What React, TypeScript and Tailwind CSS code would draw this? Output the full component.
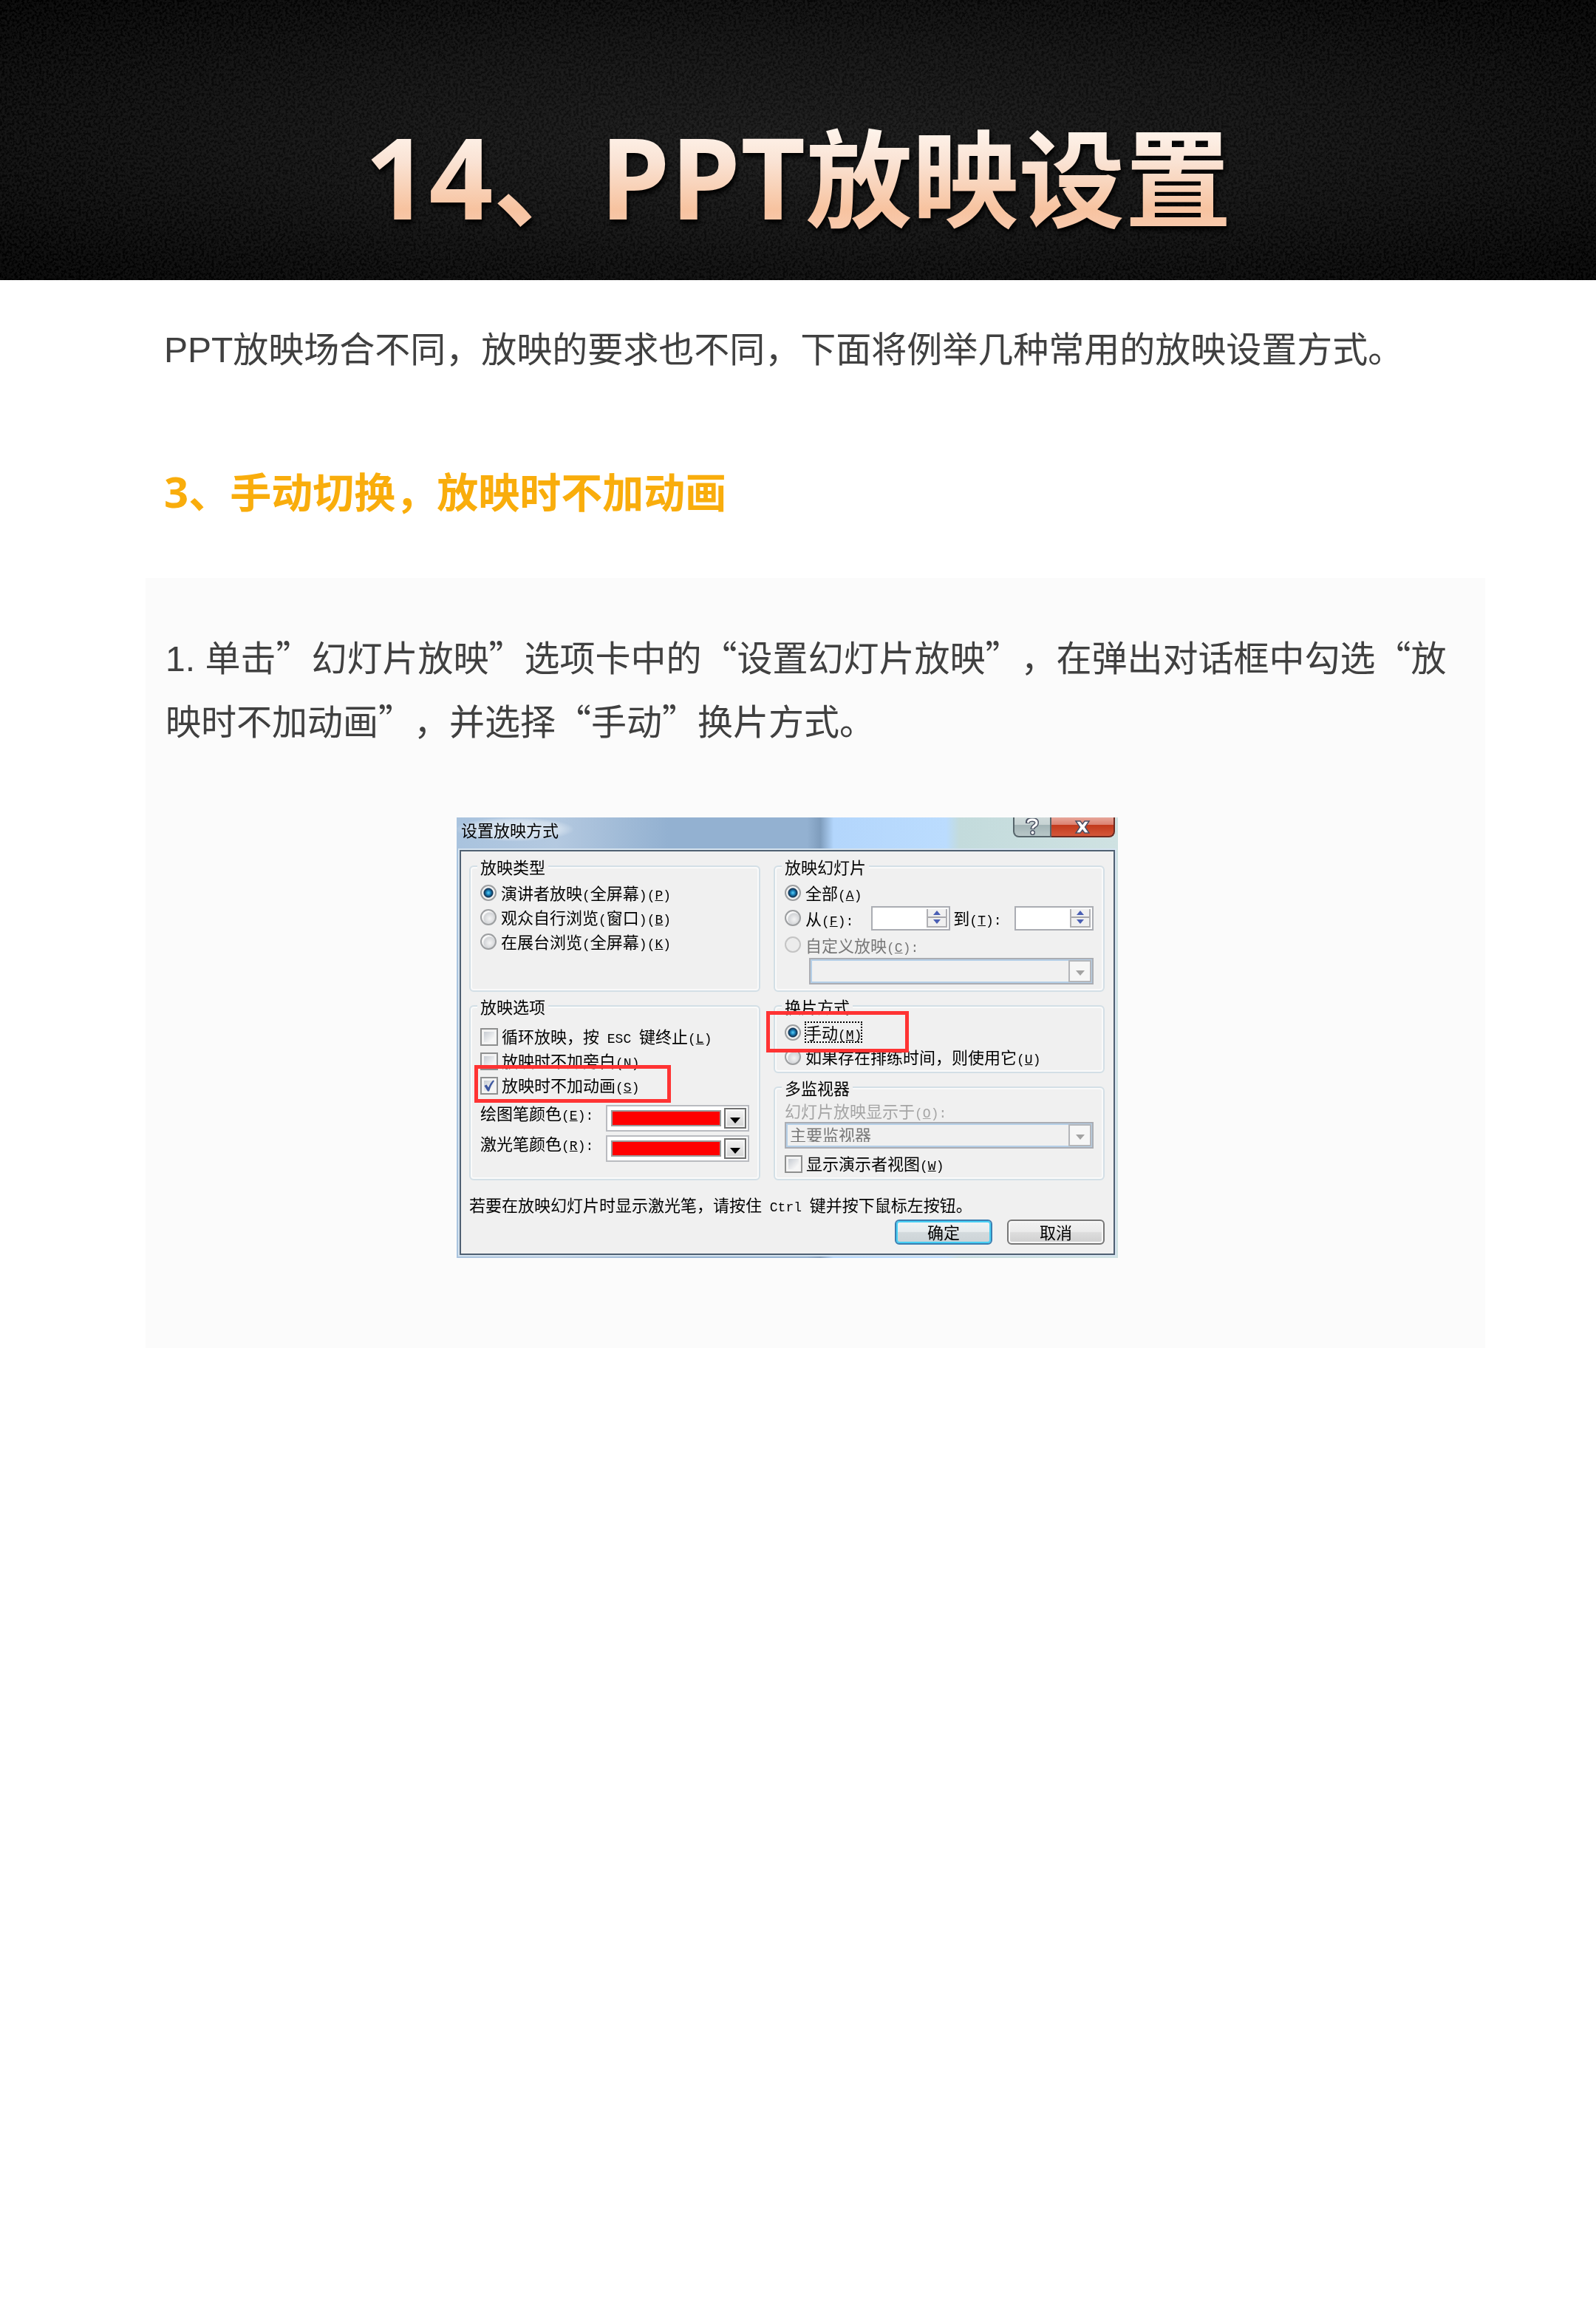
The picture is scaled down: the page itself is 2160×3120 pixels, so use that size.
import React, { useState } from 'react'

type LabelTextProps = {
  text: string
  hotkey?: string
  colon?: boolean
}

// Half-width runs use the mono face, full-width runs keep the dialog font
const LabelText = ({ text, hotkey, colon }: LabelTextProps) => (
  <span className="whitespace-pre">
    {text.split(/([\x20-\x7e]+)/).map((part, i) =>
      i % 2 ? <span key={i} className="font-['Liberation_Mono'] text-lg leading-none">{part}</span> : part
    )}
    {hotkey && (
      <span className="font-['Liberation_Mono'] text-lg leading-none">
        (<span className="underline">{hotkey}</span>){colon && ':'}
      </span>
    )}
  </span>
)

type GroupProps = {
  title: string
  className?: string
  children: React.ReactNode
}

const Group = ({ title, className = '', children }: GroupProps) => (
  <fieldset className={`min-w-0 rounded-md border-2 border-[#d3dfe6] px-[13px] shadow-[inset_0_0_0_2px_#fafafa] ${className}`}>
    <legend className="bg-[#f0f0f0] -ml-1 px-1 leading-[22px]">{title}</legend>
    {children}
  </fieldset>
)

type RadioProps = {
  name: string
  text: string
  hotkey: string
  colon?: boolean
  checked?: boolean
  disabled?: boolean
  focused?: boolean
  onSelect?: () => void
  className?: string
  children?: React.ReactNode
}

const Radio = ({ name, text, hotkey, colon, checked = false, disabled, focused, onSelect, className = 'h-[33px]', children }: RadioProps) => (
  <label className={`relative flex items-center ${disabled ? 'text-[#777]' : ''} ${className}`}>
    <input
      type="radio"
      name={name}
      checked={checked}
      disabled={disabled}
      onChange={onSelect}
      className="appearance-none size-[22px] shrink-0 mr-1.5 rounded-full border-2 border-[#9c9ea0] bg-[radial-gradient(circle_at_60%_60%,#f4f4f4_0,#d3d5d8_50%,#fafafa_62%)] checked:bg-[radial-gradient(circle_at_50%_50%,#5cd0f5_0,#1c86c0_22%,#123a5c_42%,#12385a_46%,#f3f3f3_56%)] disabled:border-[#c4c4c4] disabled:bg-none disabled:bg-[#ececec]"
    />
    <span className={`h-[27px] leading-[27px] ${focused ? 'outline-2 outline-dotted -outline-offset-1 outline-black' : ''}`}>
      <LabelText text={text} hotkey={hotkey} colon={colon}/>
    </span>
    {children}
  </label>
)

type CheckProps = {
  text: string
  hotkey: string
  defaultChecked?: boolean
  className?: string
  children?: React.ReactNode
}

const Check = ({ text, hotkey, defaultChecked, className = 'h-[33px]', children }: CheckProps) => (
  <label className={`relative flex items-center ${className}`}>
    <span className="relative flex mr-[5px]">
      <input
        type="checkbox"
        defaultChecked={defaultChecked}
        className="peer appearance-none size-6 border-2 border-[#8e8f8f] bg-[linear-gradient(135deg,#b9bfc8,#f6f6f6_70%)] shadow-[inset_0_0_0_3px_#f4f4f4]"
      />
      <svg viewBox="0 0 24 24" className="absolute inset-0 size-6 hidden peer-checked:block pointer-events-none">
        <path d="M5.500 12 L8.500 10.500 L11 14.500 Q13.500 8 17.500 4.500 L19 5.500 Q14.500 11 12 19.500 L10 19.500 Z" fill="#3d57a0"/>
      </svg>
    </span>
    <LabelText text={text} hotkey={hotkey}/>
    {children}
  </label>
)

const Spinner = ({ label }: { label: string }) => (
  <span className="flex w-[107px] h-[33px] shrink-0 border-2 border-[#abadb3] bg-white pr-0.5 py-0.5">
    <input type="text" aria-label={label} className="min-w-0 flex-1 px-1 outline-none"/>
    <span className="flex flex-col w-7 border-x-2 border-b-2 border-[#b0b0b4] bg-[#f0f0f0]">
      <button type="button" aria-label="+" className="flex flex-1 items-center justify-center border-b-2 border-[#a8a8ac]">
        <svg viewBox="0 0 10 6" className="w-2.5 h-1.5"><path d="M5 0 L10 6 H0 Z" fill="#4a5fb4"/></svg>
      </button>
      <button type="button" aria-label="-" className="flex flex-1 items-center justify-center">
        <svg viewBox="0 0 10 6" className="w-2.5 h-1.5"><path d="M0 0 H10 L5 6 Z" fill="#4a5fb4"/></svg>
      </button>
    </span>
  </span>
)

const DisabledSelect = ({ label, value, className = '' }: { label: string; value: string; className?: string }) => (
  <div className={`relative h-9 ${className}`}>
    <select
      disabled
      aria-label={label}
      className="block appearance-none w-full h-full border-2 border-[#abadb3] bg-[#f0f0f0] pl-[5px] pb-1 text-[#777] leading-[22px] opacity-100 shadow-[inset_0_0_0_2px_#b5cfe7]"
    >
      <option>{value}</option>
    </select>
    <span className="absolute right-[3px] inset-y-[3px] w-[31px] border-2 border-[#b4b6ba] bg-[#f6f6f6] flex items-center justify-center pt-1 pointer-events-none">
      <svg viewBox="0 0 12 7" className="w-3 h-[7px]"><path d="M0 0 H12 L6 7 Z" fill="#a3a3a3"/></svg>
    </span>
  </div>
)

const ColorSelect = ({ id, text, hotkey }: { id: string; text: string; hotkey: string }) => (
  <div className="flex items-start justify-between h-9">
    <label htmlFor={id} className="leading-5"><LabelText text={text} hotkey={hotkey} colon/></label>
    <div className="relative w-[194px] h-9">
      <select id={id} className="block appearance-none w-full h-full border-2 border-[#b9bbc0] bg-white text-transparent">
        <option></option>
      </select>
      <span className="absolute left-[7px] top-[7px] w-[149px] h-[22px] border-2 border-[#9a9a9a] bg-[#ff0000] pointer-events-none"></span>
      <span className="absolute right-1 inset-y-1 w-[30px] border-2 border-[#707070] bg-linear-to-b from-[#f4f4f4] to-[#d4d4d4] ring-inset ring-2 ring-white/60 flex items-center justify-center pt-1.5 pointer-events-none">
        <svg viewBox="0 0 14 8" className="w-3.5 h-2"><path d="M0 0 H14 L7 8 Z" fill="#000"/></svg>
      </span>
    </div>
  </div>
)

const SlideShowDialog = () => {
  const [range, setRange] = useState('all')
  const [type, setType] = useState('presenter')
  const [advance, setAdvance] = useState('manual')

  return (
    <form
      onSubmit={(e) => e.preventDefault()}
      className="w-[895px] px-1 pb-1 text-[22px] leading-[22px] text-black bg-[linear-gradient(90deg,#a9c3de_0,#b4c9e0_15%,#93b1d1_32%,#93b1d1_53%,#7f9dbd_55%,#b3d6fc_57%,#bbdcfe_74%,#c3dbdc_76%,#cfe2e2_100%)]"
    >
      {/* Title bar */}
      <div className="flex items-start justify-between h-11">
        <h3 className="-ml-1 pl-1.5 pr-5 leading-8 bg-[radial-gradient(ellipse_at_center,#e6eef6_0,#dbe6f1aa_55%,transparent_72%)]">设置放映方式</h3>
        <div className="flex">
          <button type="button" aria-label="帮助" className="flex w-[52px] h-[27px] items-center justify-center rounded-bl-lg border-2 border-t-0 border-[#56656b] bg-[linear-gradient(#cfdada_0,#c6d2d3_40%,#a3b4b6_42%,#b8c7c8_100%)]">
            <svg viewBox="0 0 18 24" className="w-[18px] h-6" fill="none">
              <path d="M3 7 V5 Q3 2 9 2 Q15 2 15 6 Q15 9 12 10.500 Q9.500 12 9.500 15" stroke="#4e5566" strokeWidth="6"/>
              <circle cx="9.500" cy="19.500" r="3.500" fill="#4e5566"/>
              <path d="M3.500 6 V5 Q4 2 9 2 Q15 2 15 6 Q15 9 12 10.500 Q9.500 12 9.500 14" stroke="#fff" strokeWidth="3"/>
              <circle cx="9.500" cy="19.500" r="2" fill="#fff"/>
            </svg>
          </button>
          <button type="button" aria-label="关闭" className="flex w-[86px] h-[27px] items-center justify-center rounded-br-lg border-2 border-t-0 border-l-0 border-[#6d2a20] bg-[linear-gradient(#e7a79b_0,#dc8372_38%,#c23a1c_41%,#d4573a_100%)]">
            <svg viewBox="0 0 22 18" className="w-[22px] h-[18px]">
              <path d="M2 1 H8 L11 5 L14 1 H20 L14.500 9 L20 17 H14 L11 13 L8 17 H2 L7.500 9 Z" fill="#fff" stroke="#4b4f63" strokeWidth="1.500"/>
            </svg>
          </button>
        </div>
      </div>

      <div className="border-2 border-[#4f6072] bg-[#f0f0f0] pl-[11px] pr-3 pt-[9px] pb-3 shadow-[0_0_0_2px_#d5e3ef]">
        <div className="grid grid-cols-[394px_1fr] gap-x-[18px]">
          <div className="flex flex-col gap-2">
            <Group title="放映类型" className="pt-2 pb-[50px]">
              <Radio name="type" text="演讲者放映(全屏幕)" hotkey="P" checked={type === 'presenter'} onSelect={() => setType('presenter')}/>
              <Radio name="type" text="观众自行浏览(窗口)" hotkey="B" checked={type === 'window'} onSelect={() => setType('window')}/>
              <Radio name="type" text="在展台浏览(全屏幕)" hotkey="K" checked={type === 'kiosk'} onSelect={() => setType('kiosk')}/>
            </Group>

            <Group title="放映选项" className="flex-1 pt-3.5">
              <Check text="循环放映，按 ESC 键终止" hotkey="L"/>
              <Check text="放映时不加旁白" hotkey="N"/>
              <Check text="放映时不加动画" hotkey="S" defaultChecked>
                <span className="absolute z-10 -left-2 -top-[11px] -bottom-[7px] w-[266px] border-5 border-[#ff3333] pointer-events-none"></span>
              </Check>
              <div className="flex flex-col gap-[5px] mt-2.5">
                <ColorSelect id="pen-color" text="绘图笔颜色" hotkey="E"/>
                <ColorSelect id="laser-color" text="激光笔颜色" hotkey="R"/>
              </div>
            </Group>
          </div>

          <div className="flex flex-col gap-2">
            <Group title="放映幻灯片" className="pt-2 pb-2">
              <Radio name="range" text="全部" hotkey="A" checked={range === 'all'} onSelect={() => setRange('all')}/>
              <div className="flex items-center justify-between h-9">
                <Radio name="range" text="从" hotkey="F" colon checked={range === 'part'} onSelect={() => setRange('part')} className="h-[33px] w-[112px]"/>
                <Spinner label="从"/>
                <span className="w-[78px]"><LabelText text="到" hotkey="T" colon/></span>
                <Spinner label="到"/>
              </div>
              <Radio name="range" text="自定义放映" hotkey="C" colon disabled className="h-9"/>
              <DisabledSelect label="自定义放映" value="" className="ml-[33px]"/>
            </Group>

            <Group title="换片方式" className="pt-2 pb-1">
              <Radio name="advance" text="手动" hotkey="M" focused checked={advance === 'manual'} onSelect={() => setAdvance('manual')}>
                <span className="absolute z-10 -left-[25px] -top-3 -bottom-[11px] w-[193px] border-5 border-[#ff3333] pointer-events-none"></span>
              </Radio>
              <Radio name="advance" text="如果存在排练时间，则使用它" hotkey="U" checked={advance === 'timing'} onSelect={() => setAdvance('timing')}/>
            </Group>

            <Group title="多监视器" className="pt-1.5 pb-1">
              <div className="h-7 leading-7 text-[#a5a5a5]"><LabelText text="幻灯片放映显示于" hotkey="O" colon/></div>
              <DisabledSelect label="幻灯片放映显示于" value="主要监视器" className="mt-0.5"/>
              <Check text="显示演示者视图" hotkey="W" className="mt-1 h-[33px]"/>
            </Group>
          </div>
        </div>

        <p className="mt-[21px]">
          <LabelText text="若要在放映幻灯片时显示激光笔，请按住 Ctrl 键并按下鼠标左按钮。"/>
        </p>

        <div className="flex justify-end gap-5 mt-[7px]">
          <button type="submit" className="w-[132px] h-[34px] pb-0.5 rounded-md border-2 border-[#3c7fb1] bg-[linear-gradient(#f0f4f5_0,#e6ebed_48%,#d3dadd_52%,#cbd3d6_100%)] shadow-[inset_0_0_0_2px_#48d0f5]">确定</button>
          <button type="button" className="w-[132px] h-[34px] pb-0.5 rounded-md border-2 border-[#777] bg-[linear-gradient(#f2f2f2_0,#ebebeb_48%,#dddddd_52%,#cfcfcf_100%)] shadow-[inset_0_0_0_2px_#f8f8f8]">取消</button>
        </div>
      </div>
    </form>
  )
}

const App = () => {
  return (
    <main
      lang="zh-CN"
      className="bg-white text-[#404040] font-['Noto_Sans_CJK_SC',sans-serif] [text-spacing-trim:space-all]"
    >
      <header className="relative h-[379px] pt-[154px] text-center bg-[radial-gradient(ellipse_at_50%_50%,#151515_0,#0d0d0d_50%,#000000_100%)]">
        {/* Leather-like grain */}
        <svg className="absolute inset-0 w-full h-full opacity-6 mix-blend-screen" aria-hidden="true">
          <filter id="grain">
            <feTurbulence type="fractalNoise" baseFrequency="0.3" numOctaves="3" seed="9"/>
            <feColorMatrix values="3 0 0 0 -1.200  3 0 0 0 -1.200  3 0 0 0 -1.200  0 0 0 0 1"/>
          </filter>
          <rect width="100%" height="100%" filter="url(#grain)"/>
        </svg>
        <h1 className="relative inline-block text-[144px] leading-[160px] font-bold text-transparent bg-clip-text bg-[linear-gradient(#fff7f0_8%,#fae3d4_40%,#f7c3a0_80%,#f8cbb0_100%)] drop-shadow-[2px_5px_3px_#000000]">
          <span className="font-['Open_Sans'] text-[152px] leading-none">14</span>、<span className="font-['Open_Sans'] text-[152px] leading-none">PPT</span>放映设置
        </h1>
      </header>

      <div className="pl-[222px] pr-[150px]">
        <p className="mt-[47px] text-5xl leading-[86px]">
          <span className="font-['Liberation_Sans'] leading-none">PPT</span>放映场合不同，放映的要求也不同，下面将例举几种常用的放映设置方式。
        </p>
        <h2 className="mt-[108px] text-[56px] leading-[86px] font-bold text-[#f9ad0c]">
          <span className="font-['Open_Sans'] text-[58px] leading-none">3</span>、手动切换，放映时不加动画
        </h2>
      </div>

      <section className="mt-[76px] ml-[197px] mr-[150px] px-[27px] pt-[62px] pb-[122px] bg-[#fbfbfb]">
        <p className="text-5xl leading-[86px]">
          <span className="font-['Liberation_Sans'] leading-none">1. </span>单击”幻灯片放映”选项卡中的“设置幻灯片放映”，在弹出对话框中勾选“放映时不加动画”，并选择“手动”换片方式。
        </p>
        <div className="flex justify-center mt-[90px] pr-[76px]">
          <SlideShowDialog/>
        </div>
      </section>
    </main>
  )
}

export default App
